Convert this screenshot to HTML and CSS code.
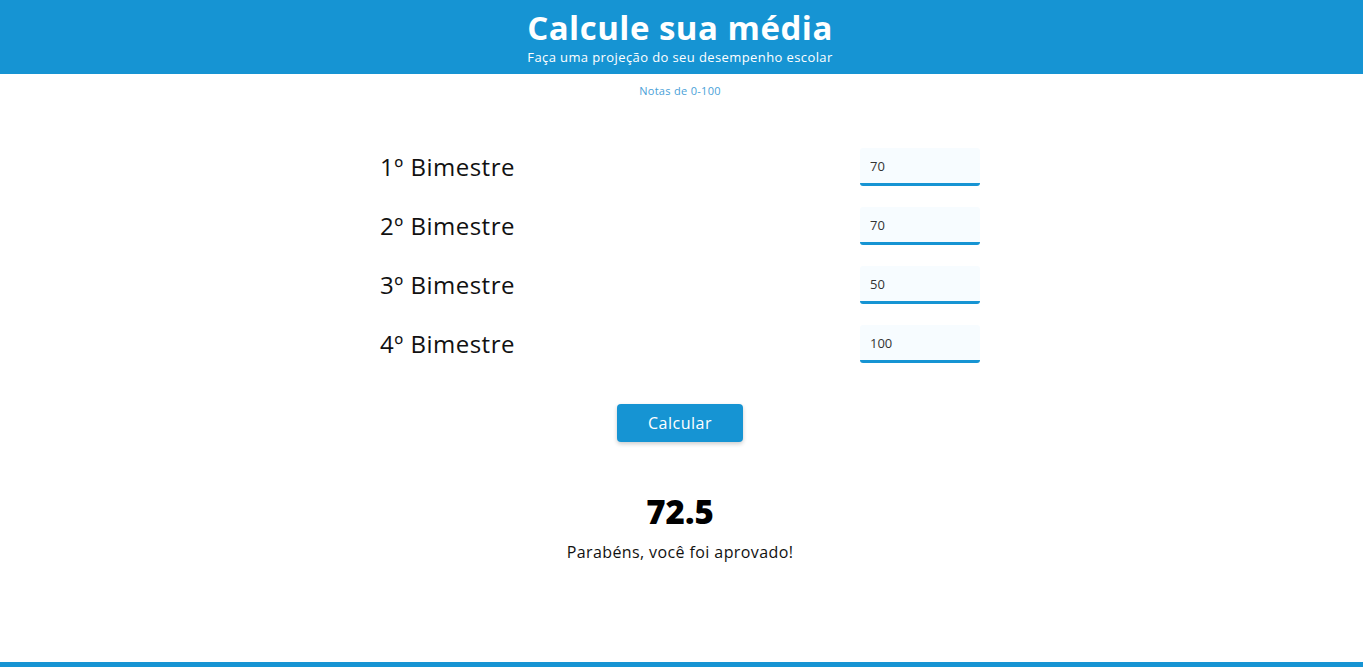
FILE: index.html
```html
<!DOCTYPE html>
<html lang="pt-BR">
<head>
<meta charset="utf-8">
<title>Calcule sua média</title>
<link rel="stylesheet" href="styles.css">
</head>
<body>
<header class="topo">
  <h1 class="titulo">Calcule sua média</h1>
  <p class="subtitulo">Faça uma projeção do seu desempenho escolar</p>
</header>
<main class="conteudo">
  <p class="aviso">Notas de 0-100</p>
  <form class="notas">
    <div class="linha"><label class="rotulo">1º Bimestre</label><input class="campo" type="text" value="70"></div>
    <div class="linha"><label class="rotulo">2º Bimestre</label><input class="campo" type="text" value="70"></div>
    <div class="linha"><label class="rotulo">3º Bimestre</label><input class="campo" type="text" value="50"></div>
    <div class="linha"><label class="rotulo">4º Bimestre</label><input class="campo" type="text" value="100"></div>
    <button class="botao" type="button">Calcular</button>
  </form>
  <section class="resultado">
    <p class="media">72.5</p>
    <p class="mensagem">Parabéns, você foi aprovado!</p>
  </section>
</main>
<footer class="rodape"></footer>
</body>
</html>
```
FILE: styles.css
```css
* { box-sizing: border-box; }
html, body { margin: 0; padding: 0; }
body {
  font-family: "Open Sans", "Noto Sans", sans-serif;
  color: #111;
  background: #fff;
  height: 667px;
  display: flex;
  flex-direction: column;
}
.topo {
  background: #1694d3;
  color: #fff;
  text-align: center;
  height: 74px;
  padding: 10px 3px 0 0;
}
.titulo {
  margin: 0;
  font-size: 33px;
  line-height: 36px;
  font-weight: 700;
  letter-spacing: 0.5px;
}
.subtitulo {
  margin: 4px 0 0;
  font-size: 13px;
  line-height: 15px;
  font-weight: 500;
  letter-spacing: 0.4px;
}
.conteudo {
  flex: 1;
  display: flex;
  flex-direction: column;
  align-items: center;
  padding-right: 3px;
}
.aviso {
  margin: 10px 0 0;
  font-size: 11px;
  line-height: 14px;
  color: #4a9fd8;
  letter-spacing: 0.3px;
}
.notas {
  width: 600px;
  margin-top: 50px;
  display: flex;
  flex-direction: column;
  gap: 21px;
}
.linha {
  display: flex;
  justify-content: space-between;
  align-items: center;
  height: 38px;
}
.rotulo {
  font-size: 24px;
  font-weight: 400;
  color: #111;
  letter-spacing: 0.5px;
  padding-bottom: 2px;
}
.campo {
  width: 120px;
  height: 38px;
  border: none;
  border-bottom: 3px solid #1694d3;
  border-radius: 3px;
  background: #f7fcff;
  padding: 0 10px;
  font-family: inherit;
  font-size: 13px;
  color: #333;
  outline: none;
}
.botao {
  align-self: center;
  margin-top: 20px;
  width: 126px;
  height: 38px;
  border: none;
  border-radius: 4px;
  background: #1694d3;
  color: #fff;
  font-family: inherit;
  font-size: 16px;
  letter-spacing: 0.5px;
  box-shadow: 0 2px 4px rgba(0,0,0,0.2);
}
.resultado {
  margin-top: 50px;
  text-align: center;
}
.media {
  margin: 0;
  font-size: 33px;
  font-weight: 800;
  line-height: 40px;
  color: #000;
}
.mensagem {
  margin: 9px 0 0;
  font-size: 16px;
  line-height: 22px;
  color: #111;
  letter-spacing: 0.4px;
}
.rodape {
  margin-top: auto;
  height: 5px;
  background: #1694d3;
}
```
